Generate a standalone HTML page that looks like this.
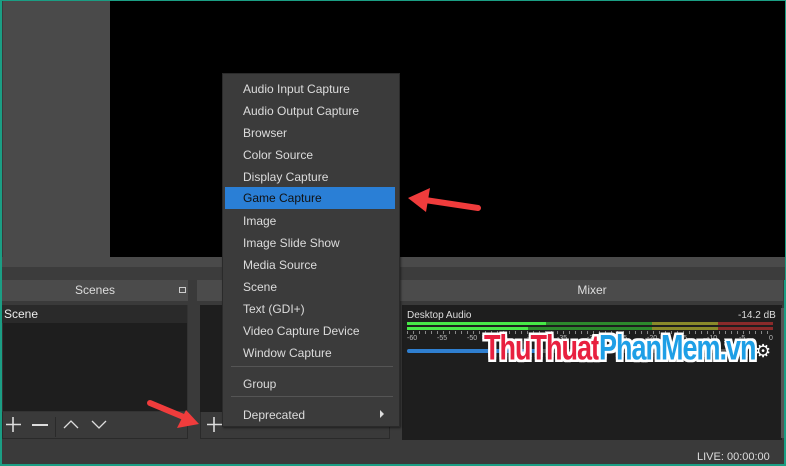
<!DOCTYPE html>
<html><head><meta charset="utf-8"><style>
*{margin:0;padding:0;box-sizing:border-box}
body{width:786px;height:466px;overflow:hidden;background:#3a3a3a;font-family:"Liberation Sans",sans-serif;font-size:12px;color:#ddd;position:relative}
.a{position:absolute}
.menu{left:222px;top:73px;width:178px;height:354px;background:#3b3b3b;border:1px solid #2a2a2a;box-shadow:1px 1px 2px rgba(0,0,0,.5)}
.it{position:absolute;left:20px;font-size:12px;color:#dcdcdc;line-height:22px}
.sep{position:absolute;left:8px;width:162px;height:1px;background:#555}
.hdr{background:#4b4b4b;height:21px;text-align:center;line-height:21px;font-size:12px;color:#ddd}
.tick{position:absolute;top:335px;font-size:7px;color:#bbb}
</style></head><body>
<div class="a" style="left:0;top:0;width:786px;height:466px;border:2px solid #1b9e84;border-bottom:none;border-top-width:1px"></div>
<div class="a" style="left:3px;top:1px;width:107px;height:256px;background:#4a4a4a"></div>
<div class="a" style="left:110px;top:1px;width:675px;height:256px;background:#000"></div>
<div class="a" style="left:2px;top:257px;width:783px;height:10px;background:#4a4a4a"></div>
<div class="a" style="left:2px;top:267px;width:783px;height:13px;background:#3c3c3c"></div>
<!-- scenes -->
<div class="a hdr" style="left:2px;top:280px;width:186px">Scenes</div>
<div class="a" style="left:179px;top:287px;width:7px;height:6px;border:1px solid #ccc"></div>
<div class="a" style="left:2px;top:305px;width:186px;height:107px;background:#1e1e1e;border:1px solid #333"></div>
<div class="a" style="left:2px;top:305px;width:185px;height:18px;background:#2a2a2a;color:#eee;line-height:18px;padding-left:2px">Scene</div>
<div class="a" style="left:2px;top:412px;width:186px;height:27px;background:#3a3a3a;border:1px solid #2a2a2a;border-top:none"></div>
<svg class="a" style="left:5px;top:416px" width="18" height="18"><path d="M8 1V16M1 8.5H16" stroke="#ddd" stroke-width="1.6"/></svg>
<div class="a" style="left:32px;top:424px;width:16px;height:2px;background:#ddd"></div>
<div class="a" style="left:55px;top:417px;width:1px;height:20px;background:#2a2a2a"></div>
<svg class="a" style="left:62px;top:417px" width="50" height="14"><path d="M2 11 L9 4 L16 11 M30 4 L37 11 L44 4" stroke="#ddd" fill="none" stroke-width="1.3"/></svg>
<!-- sources -->
<div class="a hdr" style="left:197px;top:280px;width:204px"></div>
<div class="a" style="left:200px;top:305px;width:190px;height:107px;background:#1e1e1e"></div>
<div class="a" style="left:200px;top:412px;width:190px;height:27px;border:1px solid #2a2a2a;border-top:none"></div>
<svg class="a" style="left:206px;top:416px" width="18" height="18"><path d="M8 1V16M1 8.5H16" stroke="#ddd" stroke-width="1.6"/></svg>
<!-- mixer -->
<div class="a hdr" style="left:401px;top:280px;width:382px">Mixer</div>
<div class="a" style="left:402px;top:305px;width:380px;height:135px;background:#1e1e1e"></div>
<div class="a" style="left:781px;top:308px;width:3px;height:130px;background:#555"></div>
<div class="a" style="left:407px;top:310px;font-size:10px">Desktop Audio</div>
<div class="a" style="left:738px;top:310px;font-size:10px">-14.2 dB</div>
<div class="a" style="left:407px;top:322px;width:366px;height:3px;background:linear-gradient(90deg,#47e847 0 38%,#2c8a2c 38% 67%,#8a8a2a 67% 85%,#8a2a2a 85%)"></div>
<div class="a" style="left:407px;top:327px;width:366px;height:3px;background:linear-gradient(90deg,#47e847 0 33%,#2c8a2c 33% 67%,#8a8a2a 67% 85%,#8a2a2a 85%)"></div>
<div class="a" style="left:407px;top:331px;width:366px;height:3px;background:repeating-linear-gradient(90deg,#888 0 1px,transparent 1px 6px)"></div>
<div class="tick" style="left:407px">-60</div><div class="tick" style="left:437px">-55</div><div class="tick" style="left:467px">-50</div><div class="tick" style="left:497px">-45</div><div class="tick" style="left:527px">-40</div><div class="tick" style="left:557px">-35</div><div class="tick" style="left:587px">-30</div><div class="tick" style="left:617px">-25</div><div class="tick" style="left:647px">-20</div><div class="tick" style="left:677px">-15</div><div class="tick" style="left:707px">-10</div><div class="tick" style="left:739px">-5</div><div class="tick" style="left:769px">0</div>
<div class="a" style="left:407px;top:349px;width:330px;height:4px;border-radius:2px;background:linear-gradient(90deg,#2f7fd0 0 40%,#555 40%)"></div>
<div class="a" style="left:484px;top:333px;font-size:27px;font-weight:bold;letter-spacing:-1px;transform:scaleY(1.3);transform-origin:0 50%;text-shadow:2px 0 #fff,-2px 0 #fff,0 2px #fff,0 -2px #fff,2px 2px #fff,-2px -2px #fff,2px -2px #fff,-2px 2px #fff"><span style="color:#e8203f">ThuThuat</span><span style="color:#1e9fe6">PhanMem.vn</span></div>
<div class="a" style="left:755px;top:341px;font-size:18px;color:#fff">⚙</div>
<div class="a" style="left:697px;top:451px;font-size:11px;color:#ddd">LIVE: 00:00:00</div>
<div class="a" style="left:0;top:464px;width:786px;height:2px;background:#1b9e84"></div>
<!-- menu -->
<div class="a menu">
<div class="it" style="top:4px">Audio Input Capture</div>
<div class="it" style="top:26px">Audio Output Capture</div>
<div class="it" style="top:48px">Browser</div>
<div class="it" style="top:70px">Color Source</div>
<div class="it" style="top:92px">Display Capture</div>
<div style="position:absolute;left:2px;top:113px;width:170px;height:22px;background:#2a7fd6"></div>
<div class="it" style="top:113px;color:#111">Game Capture</div>
<div class="it" style="top:136px">Image</div>
<div class="it" style="top:158px">Image Slide Show</div>
<div class="it" style="top:180px">Media Source</div>
<div class="it" style="top:202px">Scene</div>
<div class="it" style="top:224px">Text (GDI+)</div>
<div class="it" style="top:246px">Video Capture Device</div>
<div class="it" style="top:268px">Window Capture</div>
<div class="sep" style="top:292px"></div>
<div class="it" style="top:299px">Group</div>
<div class="sep" style="top:322px"></div>
<div class="it" style="top:330px">Deprecated</div>
<div style="position:absolute;left:157px;top:336px;border-left:4px solid #ddd;border-top:4px solid transparent;border-bottom:4px solid transparent"></div>
</div>
<!-- arrows -->
<svg class="a" style="left:0;top:0" width="786" height="466">
<path d="M478 208 L425 200" stroke="#f03c3c" stroke-width="6" stroke-linecap="round"/>
<path d="M408 198 L430 188 L426 212 Z" fill="#f03c3c"/>
<path d="M150 403 L186 418" stroke="#f03c3c" stroke-width="6" stroke-linecap="round"/>
<path d="M199 424 L177 428 L186 410 Z" fill="#f03c3c"/>
</svg>
</body></html>
